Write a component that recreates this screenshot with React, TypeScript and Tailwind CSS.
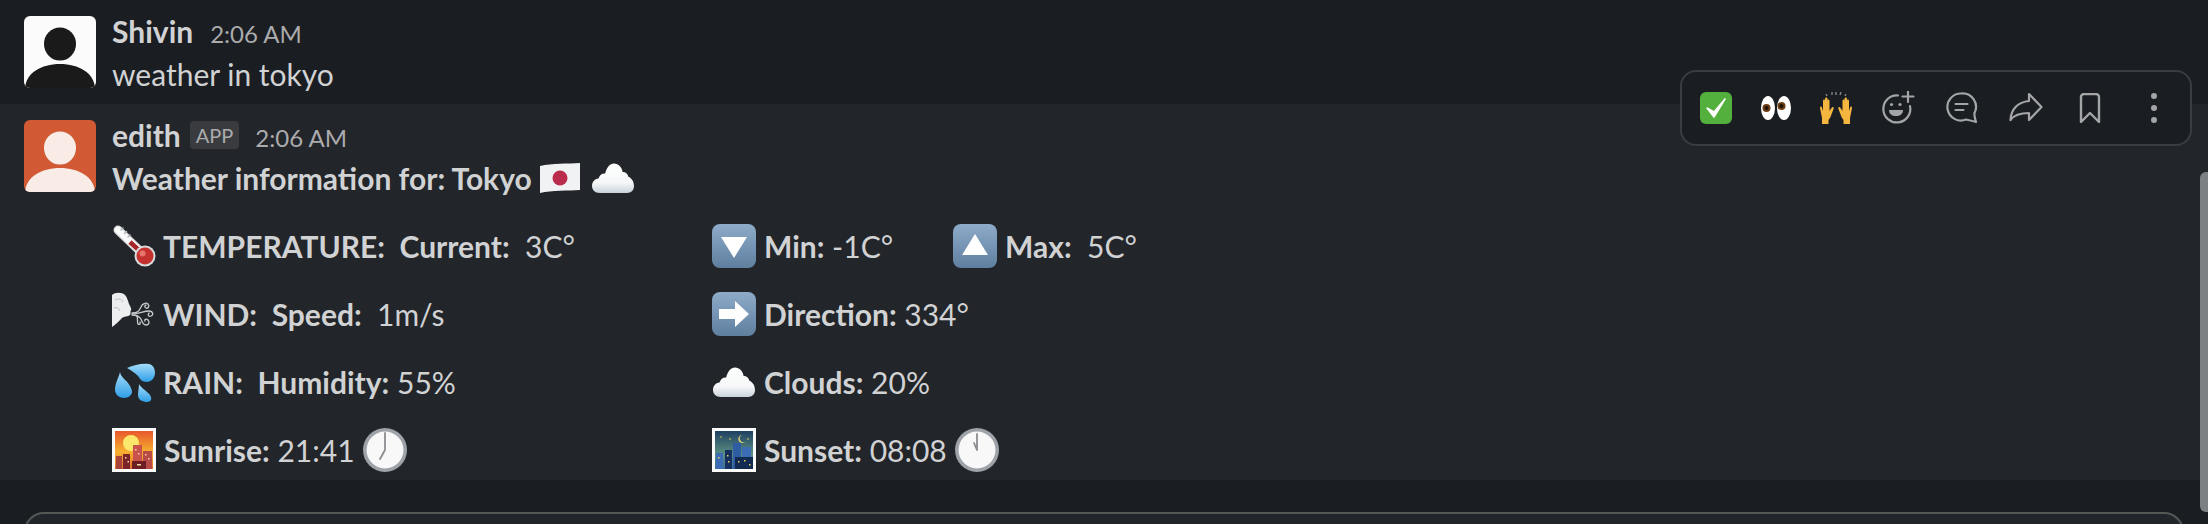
const font = { fontFamily: '"Lato", "Noto Sans", sans-serif' };

function Avatar({ bg, fg }: { bg: string; fg: string }) {
  return (
    <svg viewBox="0 0 72 72" className="w-[72px] h-[72px] shrink-0 rounded-[6px]">
      <rect width="72" height="72" fill={bg} />
      <ellipse cx="36" cy="28" rx="16" ry="16.5" fill={fg} />
      <path d="M1 72C2 57 17 48 36 48s34 9 35 24z" fill={fg} />
    </svg>
  );
}

function Cloud({ className }: { className: string }) {
  return (
    <svg viewBox="0 0 44 44" className={className}>
      <defs>
        <linearGradient id="cloudFill" x1="0" y1="0" x2="0" y2="1">
          <stop offset="0" stopColor="#ffffff" />
          <stop offset="0.65" stopColor="#f6f7f8" />
          <stop offset="1" stopColor="#c9d3dc" />
        </linearGradient>
      </defs>
      <path
        d="M9 37C3.500 37 1 33.500 1 30 1 26 3.500 23 7.500 22.500 8.500 19 11.500 17 14.200 17.500 15.500 11.500 19 7.500 23 7.500c4.500 0 8 3.700 8.600 8.500 2.800-.2 5 1.800 5.800 4.800C40.800 22 43 26 43 30 43 34 40.500 37 36 37z"
        fill="url(#cloudFill)"
      />
    </svg>
  );
}

function Flag() {
  return (
    <svg viewBox="0 0 40 30" className="w-[40px] h-[30px] inline-block align-top mt-[7px] ml-[1px]">
      <path d="M0 3C12 0 28 1 40 0v27C28 28 12 27 0 30z" fill="#f1f2f3" />
      <circle cx="20" cy="15" r="7.500" fill="#b92c4c" />
    </svg>
  );
}

function Thermometer() {
  return (
    <svg viewBox="0 0 44 44" className="w-[44px] h-[44px] shrink-0">
      <line x1="6" y1="6" x2="30" y2="29" stroke="#d7d9dc" strokeWidth="9" strokeLinecap="round" />
      <line x1="6" y1="6" x2="30" y2="29" stroke="#fbfbfb" strokeWidth="6.500" strokeLinecap="round" />
      <path d="M8.500 6.500l3-3M12 10l3-3M15.500 13.500l3-3" stroke="#aab0b5" strokeWidth="1.200" />
      <line x1="18" y1="18" x2="31" y2="30" stroke="#a5242a" strokeWidth="4.500" />
      <circle cx="33" cy="32" r="10.500" fill="#d8dadc" />
      <circle cx="33" cy="32" r="8.500" fill="#c4312f" />
      <circle cx="30.500" cy="29.500" r="3" fill="#e8736a" />
    </svg>
  );
}

function WindFace() {
  return (
    <svg viewBox="0 0 44 44" className="w-[44px] h-[44px] shrink-0">
      <path
        d="M0 3C3 0 10 0 13 3c2 2 3 6 4 9 1 2 3 5 2 6-1 1 0 4-1 5-2 2-6 1-8 3-3 3-7 7-10 9z"
        fill="#eceef0"
      />
      <path d="M3 8c3-2 7-1 8 2M2 16c3-1 5 0 6 3" stroke="#b9bdc1" strokeWidth="1" fill="none" />
      <g stroke="#c9cccf" strokeWidth="1.300" fill="none" strokeLinecap="round">
        <path d="M20 21c6 0 7-2 9-6 1-3 5-5 7-3 2 2 0 5-2 4s-1-3 0-3" />
        <path d="M20 22c6 0 12-3 17-3 4 0 5 4 2 5-2 1-4-1-2-3" />
        <path d="M20 23c5 0 7 1 9 4 1 3 2 6 5 6s4-3 2-5-4 0-3 1" />
        <path d="M25 24c1 3 0 6 1 8 1 1 3 0 2-2" />
      </g>
    </svg>
  );
}

function Drops() {
  return (
    <svg viewBox="0 0 44 44" className="w-[44px] h-[44px] shrink-0">
      <defs>
        <linearGradient id="dropFill" x1="0" y1="0" x2="0" y2="1">
          <stop offset="0" stopColor="#a5dcfa" />
          <stop offset="1" stopColor="#2f9fe6" />
        </linearGradient>
      </defs>
      <path d="M15 8C22 5 30 3 37 4c5 1 6 6 6 9 0 5-4 9-8 9-5 0-7-3-9-6-3-3-7-6-11-8z" fill="url(#dropFill)" />
      <path d="M8 12c1 5 4 6 8 11 3 4 4 7 4 9 0 3-4 6-8 6s-9-3-9-8c0-7 4-13 5-18z" fill="url(#dropFill)" />
      <path d="M27 24c2 4 8 7 11 11 2 3 2 7-3 7-4 0-9-2-9-7 0-4 1-7 1-11z" fill="url(#dropFill)" />
    </svg>
  );
}

function Sunrise() {
  return (
    <svg viewBox="0 0 44 44" className="w-[44px] h-[44px] shrink-0">
      <defs>
        <linearGradient id="sunSky" x1="0" y1="0" x2="0" y2="1">
          <stop offset="0" stopColor="#e8572c" />
          <stop offset="0.55" stopColor="#f6b12f" />
          <stop offset="1" stopColor="#e5702f" />
        </linearGradient>
      </defs>
      <rect width="44" height="44" fill="#fbfbfb" />
      <rect x="3" y="3" width="38" height="38" fill="url(#sunSky)" />
      <circle cx="19" cy="15" r="8" fill="#fbe86a" />
      <rect x="4" y="28" width="6" height="13" fill="#a8443c" />
      <rect x="11" y="26" width="7" height="15" fill="#7a2329" />
      <rect x="21" y="17" width="9" height="24" fill="#c9524d" />
      <rect x="31" y="23" width="9" height="18" fill="#b84a48" />
      <rect x="20" y="33" width="14" height="8" fill="#6d1e24" />
      <g fill="#f6d9a0">
        <rect x="13" y="29" width="1.500" height="1.500" />
        <rect x="15.500" y="33" width="1.500" height="1.500" />
        <rect x="23" y="21" width="1.500" height="1.500" />
        <rect x="26" y="25" width="1.500" height="1.500" />
        <rect x="33" y="26" width="1.500" height="1.500" />
        <rect x="36" y="30" width="1.500" height="1.500" />
        <rect x="25" y="36" width="4" height="1.500" />
      </g>
    </svg>
  );
}

function NightCity() {
  return (
    <svg viewBox="0 0 44 44" className="w-[44px] h-[44px] shrink-0">
      <defs>
        <linearGradient id="nightSky" x1="0" y1="0" x2="0" y2="1">
          <stop offset="0" stopColor="#1f3f63" />
          <stop offset="0.6" stopColor="#5a8f80" />
          <stop offset="1" stopColor="#3d6f96" />
        </linearGradient>
      </defs>
      <rect width="44" height="44" fill="#fbfbfb" />
      <rect x="3" y="3" width="38" height="38" fill="url(#nightSky)" />
      <path d="M30 7a4 4 0 1 0 3 7 3.500 3.500 0 0 1-3-7z" fill="#f6e27a" />
      <rect x="4" y="25" width="7" height="16" fill="#3c6cb4" />
      <rect x="13" y="22" width="7" height="19" fill="#15305f" />
      <rect x="21" y="15" width="8" height="26" fill="#2f5da4" />
      <rect x="30" y="19" width="9" height="22" fill="#3c6cb4" />
      <rect x="23" y="29" width="18" height="12" fill="#122a52" />
      <g fill="#f1d25c">
        <circle cx="9" cy="9" r="0.800" />
        <circle cx="18" cy="11" r="0.800" />
        <circle cx="36" cy="11" r="0.800" />
        <rect x="6" y="29" width="1.500" height="1.500" />
        <rect x="15" y="27" width="1.500" height="1.500" />
        <rect x="16" y="33" width="1.500" height="1.500" />
        <rect x="26" y="33" width="1.500" height="1.500" />
        <rect x="32" y="32" width="1.500" height="1.500" />
        <rect x="37" y="36" width="1.500" height="1.500" />
      </g>
    </svg>
  );
}

function Clock({ hands }: { hands: string }) {
  return (
    <svg viewBox="0 0 44 44" className="w-[44px] h-[44px] shrink-0">
      <circle cx="22" cy="22" r="22" fill="#9da3a9" />
      <circle cx="22" cy="22" r="18.500" fill="#f8f8f8" />
      <path d={hands} stroke="#8a8d90" strokeWidth="1.800" strokeLinecap="round" fill="none" />
    </svg>
  );
}

function ArrowTile({ shape }: { shape: string }) {
  return (
    <svg viewBox="0 0 44 44" className="w-[44px] h-[44px] shrink-0">
      <defs>
        <linearGradient id="tileFill" x1="0" y1="0" x2="0" y2="1">
          <stop offset="0" stopColor="#8eabc9" />
          <stop offset="1" stopColor="#5f7f9f" />
        </linearGradient>
      </defs>
      <rect width="44" height="44" rx="8" fill="url(#tileFill)" />
      <path d={shape} fill="#ffffff" />
    </svg>
  );
}

function Label({ children }: { children: React.ReactNode }) {
  return <span className="font-bold">{children}</span>;
}

function CheckEmoji() {
  return (
    <svg viewBox="0 0 32 32" className="w-[32px] h-[32px]">
      <rect width="32" height="32" rx="6" fill="#54b03c" />
      <path d="M7 16l7 9L25 7l-11 13z" fill="#ffffff" stroke="#ffffff" strokeWidth="1.500" strokeLinejoin="round" />
    </svg>
  );
}

function EyesEmoji() {
  return (
    <svg viewBox="0 0 32 32" className="w-[32px] h-[32px]">
      <ellipse cx="8" cy="16" rx="7" ry="12" fill="#ffffff" />
      <ellipse cx="24" cy="16" rx="7" ry="12" fill="#ffffff" />
      <circle cx="6.500" cy="16" r="4" fill="#6b3c14" />
      <circle cx="21.500" cy="14" r="4" fill="#6b3c14" />
      <circle cx="6.500" cy="16" r="2" fill="#1c1208" />
      <circle cx="21.500" cy="14" r="2" fill="#1c1208" />
    </svg>
  );
}

function HandsEmoji() {
  return (
    <svg viewBox="0 0 34 32" className="w-[34px] h-[32px]">
      <path
        d="M3 32v-6L1 16c0-2 2-2 2 0l1 3V9c0-2 2-2 2 0v6-8c0-2 2.500-2 2.500 0v8-6c0-2 2-2 2 0v10l2-3c1-2 3-1 2 1l-3 8-2 3v4z"
        fill="#f4b63f"
      />
      <path
        d="M31 32v-6l2-10c0-2-2-2-2 0l-1 3V9c0-2-2-2-2 0v6-8c0-2-2.500-2-2.500 0v8-6c0-2-2-2-2 0v10l-2-3c-1-2-3-1-2 1l3 8 2 3v4z"
        fill="#f4b63f"
      />
      <path d="M7 2l1 2M13 0v3M17 0v3M22 0l-1 3M27 2l-1 2" stroke="#8a8d90" strokeWidth="1.300" />
    </svg>
  );
}

const iconStroke = "#a3a5a7";

function ToolbarIcons({ name }: { name: string }) {
  if (name === "react") {
    return (
      <svg viewBox="0 0 34 34" className="w-[34px] h-[34px]" fill="none" stroke={iconStroke} strokeWidth="2.200" strokeLinecap="round">
        <path d="M17 4.500A13.500 13.500 0 1 0 29 15" />
        <path d="M27 0v11M21.500 5.500h11" />
        <circle cx="10.500" cy="13.500" r="1.600" fill={iconStroke} stroke="none" />
        <circle cx="19" cy="13.500" r="1.600" fill={iconStroke} stroke="none" />
        <path d="M8 19h14c0 4-3 6-7 6s-7-2-7-6z" fill={iconStroke} stroke="none" />
      </svg>
    );
  }
  if (name === "comment") {
    return (
      <svg viewBox="0 0 32 32" className="w-[32px] h-[32px]" fill="none" stroke={iconStroke} strokeWidth="2.200" strokeLinecap="round" strokeLinejoin="round">
        <path d="M15 1.500a13.500 13.500 0 1 0 5 26c3 .7 7 1.500 10 2.500-1-3-2-6-1.500-9A13.500 13.500 0 0 0 15 1.500z" />
        <path d="M9.500 12h12M9.500 18h8" />
      </svg>
    );
  }
  if (name === "share") {
    return (
      <svg viewBox="0 0 34 32" className="w-[34px] h-[32px]" fill="none" stroke={iconStroke} strokeWidth="2.200" strokeLinecap="round" strokeLinejoin="round">
        <path d="M20 2l12.500 13L20 28v-7C11 21 5 23 1.500 28 2 17 9 10 20 9z" />
      </svg>
    );
  }
  if (name === "bookmark") {
    return (
      <svg viewBox="0 0 22 30" className="w-[22px] h-[30px]" fill="none" stroke={iconStroke} strokeWidth="2.400" strokeLinecap="round" strokeLinejoin="round">
        <path d="M2 4a3 3 0 0 1 3-3h12a3 3 0 0 1 3 3v25l-9-9-9 9z" />
      </svg>
    );
  }
  return (
    <svg viewBox="0 0 8 32" className="w-[8px] h-[32px]" fill={iconStroke}>
      <circle cx="4" cy="4" r="3" />
      <circle cx="4" cy="16" r="3" />
      <circle cx="4" cy="28" r="3" />
    </svg>
  );
}

const toolbarIcons = ["react", "comment", "share", "bookmark", "dots"];

export default function App() {
  return (
    <div className="relative w-[2208px] h-[524px] overflow-hidden bg-[#1a1d21] text-[30px] leading-[44px] text-[#d1d2d3]" style={font}>
      <div className="flex gap-4 h-[104px] px-6 pt-4">
        <Avatar bg="#fbfbfb" fg="#1a1a1a" />
        <div className="-mt-[7px]">
          <div className="flex items-baseline gap-[17px] h-[43px]">
            <span className="font-bold">Shivin</span>
            <span className="text-[24px] text-[#ababad]">2:06 AM</span>
          </div>
          <div>weather in tokyo</div>
        </div>
      </div>

      <div className="flex gap-4 h-[376px] px-6 pt-4 bg-[#222529]">
        <Avatar bg="#d15a34" fg="#f9ece7" />
        <div className="-mt-[7px]">
          <div className="flex items-baseline h-[43px]">
            <span className="font-bold">edith</span>
            <span className="ml-[9px] self-center h-[28px] px-[6px] rounded-[4px] bg-[#393b3f] text-[20px] leading-[28px] text-[#ababad]">APP</span>
            <span className="ml-4 text-[24px] text-[#ababad]">2:06 AM</span>
          </div>
          <div className="font-bold flex">
            <span>Weather information for: Tokyo&nbsp;</span>
            <Flag />
            <Cloud className="w-[44px] h-[44px] ml-[11px]" />
          </div>

          <div className="mt-[24px] grid grid-cols-[600px_600px] gap-y-6 whitespace-pre">
            <div className="flex gap-[7px]">
              <Thermometer />
              <span><Label>TEMPERATURE:  Current:</Label>  3C°</span>
            </div>
            <div className="flex">
              <ArrowTile shape="M9 13h26L22 34z" />
              <span className="ml-[8px]"><Label>Min:</Label> -1C°</span>
              <span className="ml-[60px]"><ArrowTile shape="M9 31h26L22 10z" /></span>
              <span className="ml-[8px]"><Label>Max:</Label>  5C°</span>
            </div>
            <div className="flex gap-[7px]">
              <WindFace />
              <span><Label>WIND:  Speed:</Label>  1m/s</span>
            </div>
            <div className="flex gap-[8px]">
              <ArrowTile shape="M7 17h16v-8l14 13-14 13v-8H7z" />
              <span><Label>Direction:</Label> 334°</span>
            </div>
            <div className="flex gap-[7px]">
              <Drops />
              <span><Label>RAIN:  Humidity:</Label> 55%</span>
            </div>
            <div className="flex gap-[8px]">
              <Cloud className="w-[44px] h-[44px] shrink-0" />
              <span><Label>Clouds:</Label> 20%</span>
            </div>
            <div className="flex gap-[8px]">
              <Sunrise />
              <span><Label>Sunrise:</Label> 21:41</span>
              <Clock hands="M22 5v17M22 22l-5 9" />
            </div>
            <div className="flex gap-[8px]">
              <NightCity />
              <span><Label>Sunset:</Label> 08:08</span>
              <Clock hands="M22 6v16M22 22l-3-7" />
            </div>
          </div>
        </div>
      </div>

      <div className="mx-6 mt-8 h-[60px] rounded-t-[20px] border-2 border-[#565856] bg-[#222529]" />

      <div className="absolute left-[1680px] top-[70px] w-[512px] h-[76px] flex items-center justify-center rounded-[16px] border-2 border-[#3a3d41] bg-[#1a1d21]">
        <div className="w-[60px] flex justify-center"><CheckEmoji /></div>
        <div className="w-[60px] flex justify-center"><EyesEmoji /></div>
        <div className="w-[60px] flex justify-center"><HandsEmoji /></div>
        {toolbarIcons.map((name) => (
          <div key={name} className="w-[64px] flex justify-center">
            <ToolbarIcons name={name} />
          </div>
        ))}
      </div>

      <div className="absolute left-[2200px] top-[172px] w-[8px] h-[340px] rounded-l-[6px] bg-[#7d8083]" />
    </div>
  );
}
